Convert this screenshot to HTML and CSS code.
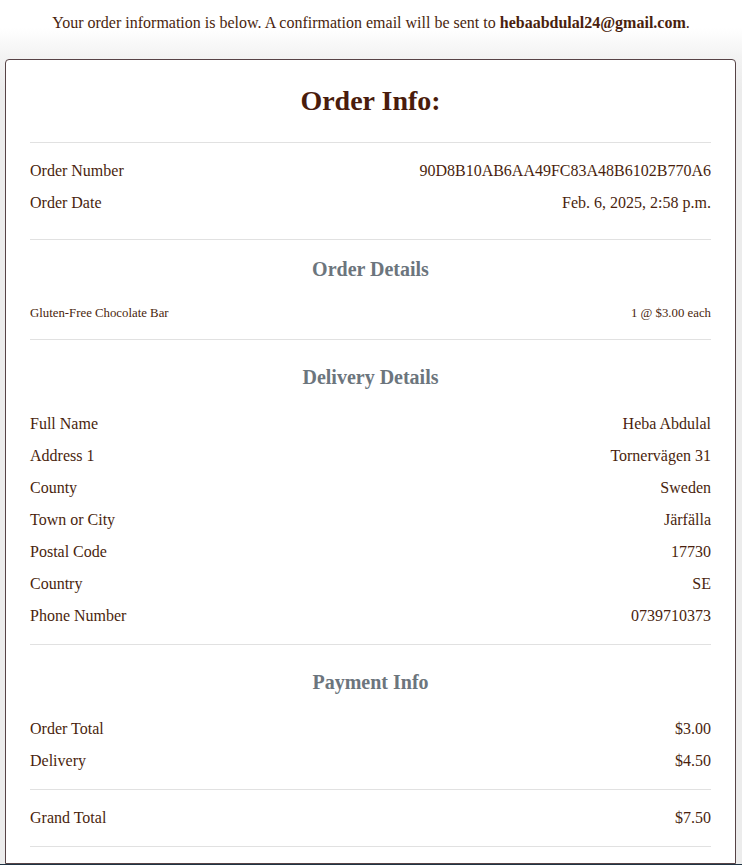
FILE: index.html
```html
<!DOCTYPE html>
<html lang="en">
<head>
<meta charset="utf-8">
<title>Order Info</title>
<link rel="stylesheet" href="styles.css">
</head>
<body>
<div class="intro">
  <p class="intro-text">Your order information is below. A confirmation email will be sent to <strong>hebaabdulal24@gmail.com</strong>.</p>
</div>
<main class="card">
  <h1 class="title">Order Info:</h1>
  <hr class="rule">
  <section class="sec sec-meta">
    <div class="row"><span>Order Number</span><span>90D8B10AB6AA49FC83A48B6102B770A6</span></div>
    <div class="row"><span>Order Date</span><span>Feb. 6, 2025, 2:58 p.m.</span></div>
  </section>
  <hr class="rule">
  <section class="sec sec-items">
    <h2 class="sub">Order Details</h2>
    <div class="row small"><span>Gluten-Free Chocolate Bar</span><span>1 @ $3.00 each</span></div>
  </section>
  <hr class="rule">
  <section class="sec sec-delivery">
    <h2 class="sub">Delivery Details</h2>
    <div class="rows">
      <div class="row"><span>Full Name</span><span>Heba Abdulal</span></div>
      <div class="row"><span>Address 1</span><span>Tornervägen 31</span></div>
      <div class="row"><span>County</span><span>Sweden</span></div>
      <div class="row"><span>Town or City</span><span>Järfälla</span></div>
      <div class="row"><span>Postal Code</span><span>17730</span></div>
      <div class="row"><span>Country</span><span>SE</span></div>
      <div class="row"><span>Phone Number</span><span>0739710373</span></div>
    </div>
  </section>
  <hr class="rule">
  <section class="sec sec-payment">
    <h2 class="sub">Payment Info</h2>
    <div class="rows pay-rows">
      <div class="row"><span>Order Total</span><span>$3.00</span></div>
      <div class="row"><span>Delivery</span><span>$4.50</span></div>
    </div>
  </section>
  <hr class="rule">
  <section class="sec sec-total">
    <div class="row"><span>Grand Total</span><span>$7.50</span></div>
  </section>
  <hr class="rule">
</main>
<footer class="footer"></footer>
</body>
</html>
```

FILE: styles.css
```css
html, body {
  margin: 0;
  padding: 0;
}
body {
  font-family: "Liberation Serif", "Times New Roman", serif;
  color: #4a1f0e;
  background: linear-gradient(#ffffff 0px, #ffffff 28px, #f3f3f3 56px, #ececec 90px, #ececec 100%);
  font-size: 16px;
  line-height: 24px;
}
.intro {
  padding-top: 11px;
  height: 48px;
}
.intro-text {
  margin: 0;
  text-align: center;
}
.intro-text strong {
  font-weight: 700;
}
.card {
  display: block;
  margin: 0 6px 0 5px;
  background: #ffffff;
  border: 1px solid #574346;
  border-radius: 4px 4px 0 0;
  padding: 24px 24px 16px;
}
.title {
  margin: 0 0 24px;
  font-size: 28px;
  line-height: 34px;
  font-weight: 700;
  text-align: center;
  color: #4a1c0c;
}
.rule {
  margin: 0;
  height: 0;
  border: 0;
  border-top: 1px solid #e1e1e1;
}
.sec {
  display: flex;
  flex-direction: column;
}
.sub {
  margin: 0;
  font-size: 20px;
  line-height: 24px;
  font-weight: 700;
  text-align: center;
  color: #6c757d;
}
.row {
  display: flex;
  justify-content: space-between;
  height: 24px;
}
.rows {
  display: flex;
  flex-direction: column;
  gap: 8px;
  margin-top: 23px;
}
.sec-meta {
  padding: 16px 0 24px;
  gap: 8px;
}
.sec-items {
  padding: 17px 0 16px;
}
.row.small {
  margin-top: 23px;
  font-size: 12.8px;
  line-height: 19px;
  height: 19px;
}
.sec-delivery {
  padding: 25px 0 16px;
}
.sec-payment {
  padding: 25px 0 16px;
}
.pay-rows {
  margin-top: 23px;
}
.sec-total {
  padding: 16px 0;
}
.footer {
  height: 40px;
  background: #1f3444;
}
```
